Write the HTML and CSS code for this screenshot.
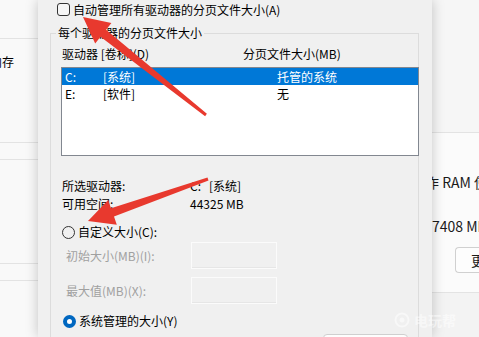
FILE: index.html
```html
<!DOCTYPE html>
<html lang="zh-CN">
<head>
<meta charset="utf-8">
<title>虚拟内存</title>
<link rel="stylesheet" href="styles.css">
</head>
<body>
<div class="page">
  <aside class="left">
    <div class="lrow la"></div>
    <div class="lrow lb"><span class="ltext">内存</span></div>
    <div class="lrow lc"></div>
    <div class="lrow lb"></div>
    <div class="lrow lc"></div>
    <div class="lrow last"></div>
  </aside>

  <section class="dialog">
    <div class="check-row"><span class="checkbox"></span><span>自动管理所有驱动器的分页文件大小(A)</span></div>
    <fieldset class="group">
      <legend>每个驱动器的分页文件大小</legend>
      <div class="cols"><span class="c1">驱动器 [卷标](D)</span><span>分页文件大小(MB)</span></div>
      <div class="listbox">
        <div class="item selected"><span class="drv">C:</span><span class="lbl">[系统]</span><span>托管的系统</span></div>
        <div class="item"><span class="drv">E:</span><span class="lbl">[软件]</span><span>无</span></div>
      </div>
      <div class="info first"><span class="k">所选驱动器:</span><span><span class="cval">C:</span>[系统]</span></div>
      <div class="info"><span class="k">可用空间:</span><span>44325 MB</span></div>
      <div class="radio-row r1"><span class="radio"></span><span>自定义大小(C):</span></div>
      <div class="field f1"><span class="fl">初始大小(MB)(I):</span><span class="input"></span></div>
      <div class="field f2"><span class="fl">最大值(MB)(X):</span><span class="input"></span></div>
      <div class="radio-row r2"><span class="radio on"></span><span>系统管理的大小(Y)</span></div>
      <div class="btn-row"><span class="btn"></span></div>
    </fieldset>
  </section>

  <section class="right">
    <div class="rtop"></div>
    <div class="card">
      <div class="rt">作 RAM 使用</div>
      <div class="rt rt2">7408 MB</div>
      <div class="rbtn">更改</div>
    </div>
    <div class="rbottom"></div>
  </section>

  <div class="watermark">
    <svg width="16" height="16" viewBox="0 0 16 16"><circle cx="8" cy="8" r="6.5" fill="none" stroke="currentColor" stroke-width="2"/><circle cx="8" cy="8" r="2.5" fill="currentColor"/></svg>
    <span>电玩帮</span>
  </div>

  <svg class="arrows" width="479" height="337" viewBox="0 0 479 337">
    <polygon points="206.9,113.8 106.1,29.7 111.4,23.0 83,17 95.2,43.4 100.5,36.7 205.1,116.2" />
    <polygon points="207.5,177.6 111.0,208.2 108.2,200.1 88,221 116.8,224.7 114.0,216.6 208.5,180.4" />
  </svg>
</div>
</body>
</html>
```
FILE: styles.css
```css
html, body {
  margin: 0;
  padding: 0;
}

body {
  width: 479px;
  height: 337px;
  overflow: hidden;
  font-family: "Noto Sans CJK SC", "Noto Sans", sans-serif;
  font-size: 12px;
  color: #000;
  background: #f3f3f3;
}

.page {
  position: relative;
  display: flex;
  width: 479px;
  height: 337px;
  overflow: hidden;
}

/* left settings list */
.left {
  width: 38px;
  flex: none;
  display: flex;
  flex-direction: column;
  background: #f9f9f9;
  overflow: hidden;
}

.lrow {
  flex: none;
  box-sizing: border-box;
  border-bottom: 1px solid #e3e3e3;
}

.la { height: 39px; }
.lb { height: 104px; }
.lc { height: 17px; }
.last { flex: 1; border-bottom: 0; }

.ltext {
  display: block;
  margin: 15px 0 0 -10px;
  line-height: 16px;
  font-size: 12px;
  white-space: nowrap;
}

/* dialog */
.dialog {
  position: relative;
  z-index: 2;
  width: 394px;
  flex: none;
  background: #f0f0f0;
  box-shadow: 0 0 12px rgba(0, 0, 0, 0.22);
  overflow: hidden;
}

.check-row {
  display: flex;
  align-items: center;
  gap: 3px;
  height: 15px;
  margin: 2px 0 0 19px;
  line-height: 16px;
  white-space: nowrap;
}

.checkbox {
  width: 13px;
  height: 13px;
  box-sizing: border-box;
  border: 1px solid #333;
  border-radius: 3px;
  background: #f6f6f6;
}

.group {
  width: 369px;
  min-width: 0;
  box-sizing: border-box;
  margin: 8px 0 0 12px;
  padding: 0 0 0 11px;
  border: 1px solid #dcdcdc;
}

.group legend {
  padding: 0 2px;
  margin-left: -6px;
  line-height: 16px;
}

.cols {
  display: flex;
  margin-top: 5px;
  line-height: 16px;
  white-space: nowrap;
}

.cols .c1 { width: 181px; }

.listbox {
  width: 358px;
  height: 89px;
  box-sizing: border-box;
  margin: 5px 0 0 -1px;
  border: 1px solid #828790;
  background: #fff;
}

.item {
  display: flex;
  height: 17px;
  line-height: 17px;
  padding-left: 3px;
  white-space: nowrap;
}

.item.selected {
  background: #0078d7;
  color: #fff;
}

.drv { width: 38px; }
.lbl { width: 174px; }

.info {
  display: flex;
  height: 18px;
  line-height: 18px;
  white-space: nowrap;
}

.info.first { margin-top: 21px; }

.k { width: 128px; }

.cval {
  display: inline-block;
  width: 19px;
}

.radio-row {
  display: flex;
  align-items: center;
  gap: 3px;
  height: 18px;
  line-height: 18px;
  white-space: nowrap;
}

.r1 { margin-top: 10px; }
.r2 { margin-top: 8px; margin-left: 1px; }

.radio {
  width: 13px;
  height: 13px;
  box-sizing: border-box;
  border: 1px solid #333;
  border-radius: 50%;
}

.radio.on {
  border: 4px solid #0067c0;
  background: #fff;
}

.field {
  display: flex;
  align-items: center;
  height: 27px;
  padding-left: 4px;
  color: #a0a0a0;
  white-space: nowrap;
}

.f1 { margin-top: 1px; }
.f2 { margin-top: 8px; }

.fl { width: 125px; }

.input {
  width: 86px;
  height: 27px;
  box-sizing: border-box;
  border: 1px solid #fbfbfb;
  box-shadow: inset 0 -1px 0 #e6e6e6;
}

.btn-row {
  margin-top: 4px;
  padding-left: 261px;
}

.btn {
  display: block;
  width: 85px;
  height: 24px;
  box-sizing: border-box;
  border: 1px solid #cfcfcf;
  border-radius: 4px;
  background: #fdfdfd;
}

/* right settings page */
.right {
  flex: 1;
  min-width: 0;
  display: flex;
  flex-direction: column;
  background: #f3f3f3;
}

.rtop {
  height: 133px;
  box-sizing: border-box;
  border-bottom: 1px solid #e3e3e3;
  background: #f6f6f6;
}

.card {
  height: 160px;
  box-sizing: border-box;
  border-bottom: 1px solid #e3e3e3;
  background: #fbfbfb;
  padding-top: 39px;
}

.rt {
  margin-left: -7px;
  font-size: 14px;
  line-height: 20px;
  white-space: nowrap;
  color: #1a1a1a;
}

.rt2 {
  margin-top: 24px;
  margin-left: 0;
}

.rbtn {
  height: 26px;
  box-sizing: border-box;
  margin: 11px 0 0 23px;
  padding-left: 15px;
  border: 1px solid #d0d0d0;
  border-right: 0;
  border-radius: 4px 0 0 4px;
  background: #fdfdfd;
  font-size: 14px;
  line-height: 24px;
  white-space: nowrap;
  color: #1a1a1a;
}

.rbottom {
  flex: 1;
  background: #f3f3f3;
}

/* overlays */
.watermark {
  position: absolute;
  left: 394px;
  top: 312px;
  z-index: 4;
  display: flex;
  align-items: center;
  gap: 4px;
  color: rgba(255, 255, 255, 0.5);
  font-size: 14px;
  font-weight: 700;
  line-height: 16px;
}

.arrows {
  position: absolute;
  left: 0;
  top: 0;
  z-index: 5;
  pointer-events: none;
}

.arrows polygon {
  fill: #e8392e;
}
```
